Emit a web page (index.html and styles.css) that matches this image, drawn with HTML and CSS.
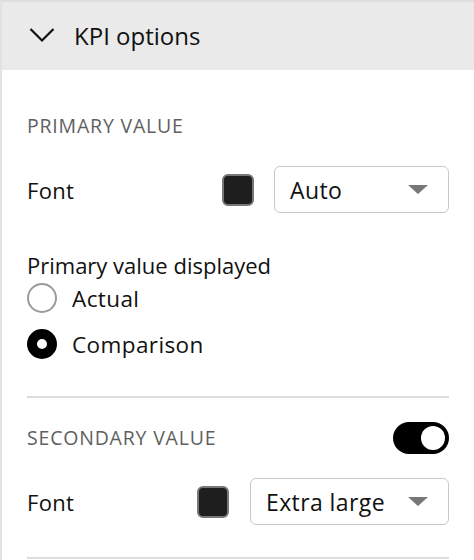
FILE: index.html
```html
<!DOCTYPE html>
<html>
<head>
<meta charset="utf-8">
<link rel="stylesheet" href="styles.css">
</head>
<body>
<div class="panel">
  <div class="header">
    <svg class="chevron" width="26" height="16" viewBox="0 0 26 16"><path d="M1.5 2 L13 13.5 L24.5 2" fill="none" stroke="#111" stroke-width="2.2"/></svg>
    <span class="title">KPI options</span>
  </div>
  <div class="body">
    <div class="section-label primary-label">PRIMARY VALUE</div>
    <div class="font-row first-font">
      <span class="row-label">Font</span>
      <div class="controls">
        <span class="swatch"></span>
        <div class="select select-auto"><span>Auto</span><span class="caret"></span></div>
      </div>
    </div>
    <div class="field-label">Primary value displayed</div>
    <div class="radio-row radio-actual"><span class="radio"></span><span class="radio-text">Actual</span></div>
    <div class="radio-row radio-comp"><span class="radio checked"></span><span class="radio-text">Comparison</span></div>
    <div class="divider mid-divider"></div>
    <div class="secondary-row">
      <span class="section-label">SECONDARY VALUE</span>
      <span class="toggle"><span class="knob"></span></span>
    </div>
    <div class="font-row second-font">
      <span class="row-label">Font</span>
      <div class="controls">
        <span class="swatch"></span>
        <div class="select select-xl"><span>Extra large</span><span class="caret"></span></div>
      </div>
    </div>
    <div class="divider bottom-divider"></div>
  </div>
</div>
</body>
</html>
```
FILE: styles.css
```css
html, body {
  margin: 0;
  padding: 0;
  background: #fff;
}
body {
  font-family: "Open Sans", "Noto Sans", sans-serif;
  color: #111;
  width: 474px;
  height: 560px;
  overflow: hidden;
}
.panel {
  border-left: 2px solid #e2e2e2;
  border-top: 2px solid #dedede;
  height: 558px;
}
.header {
  height: 68px;
  background: #eaeaea;
  display: flex;
  align-items: center;
  padding-left: 27px;
  gap: 19px;
}
.chevron {
  display: block;
  margin-top: -2px;
}
.title {
  font-size: 24px;
  color: #111;
  line-height: 30px;
}
.body {
  padding: 0 25px 0 25px;
}
.section-label {
  font-size: 19.5px;
  letter-spacing: 0.8px;
  color: #5f5f5f;
  line-height: 24px;
}
.primary-label {
  margin-top: 44px;
}
.font-row {
  display: flex;
  align-items: center;
  justify-content: space-between;
  height: 47px;
}
.first-font { margin-top: 28px; }
.second-font { margin-top: 24px; }
.row-label {
  font-size: 22px;
  letter-spacing: 0.3px;
}
.controls {
  display: flex;
  align-items: center;
  gap: 20px;
}
.second-font .controls { gap: 21px; }
.swatch {
  width: 28px;
  height: 28px;
  border: 2px solid #777;
  border-radius: 6px;
  background: #1e1e1e;
  display: block;
}
.select {
  border: 1px solid #c8c8c8;
  border-radius: 6px;
  display: flex;
  align-items: center;
  justify-content: space-between;
  padding: 0 20px 0 15px;
  font-size: 23px;
  letter-spacing: 0.4px;
  box-sizing: border-box;
  height: 47px;
}
.select-auto { width: 175px; }
.select-xl { width: 199px; }
.caret {
  width: 0;
  height: 0;
  border-left: 10px solid transparent;
  border-right: 10px solid transparent;
  border-top: 9px solid #777;
}
.field-label {
  font-size: 22px;
  line-height: 24px;
  margin-top: 40px;
}
.radio-row {
  display: flex;
  align-items: center;
  gap: 15px;
  height: 30px;
}
.radio-actual { margin-top: 6px; }
.radio-comp { margin-top: 16px; }
.radio {
  width: 26px;
  height: 26px;
  border: 2px solid #9a9a9a;
  border-radius: 50%;
  display: block;
  box-sizing: content-box;
}
.radio.checked {
  width: 10px;
  height: 10px;
  border: 10px solid #000;
  background: #fff;
}
.radio-text {
  font-size: 22.5px;
  letter-spacing: 0.4px;
}
.divider {
  height: 2px;
  background: #dddddd;
}
.mid-divider { margin-top: 37px; }
.secondary-row {
  margin-top: 24px;
  display: flex;
  align-items: center;
  justify-content: space-between;
  height: 32px;
}
.toggle {
  width: 56px;
  height: 32px;
  border-radius: 16px;
  background: #000;
  display: flex;
  align-items: center;
  justify-content: flex-end;
  padding-right: 4px;
  box-sizing: border-box;
}
.knob {
  width: 24px;
  height: 24px;
  border-radius: 50%;
  background: #fff;
  display: block;
}
.bottom-divider { margin-top: 32px; }
```
